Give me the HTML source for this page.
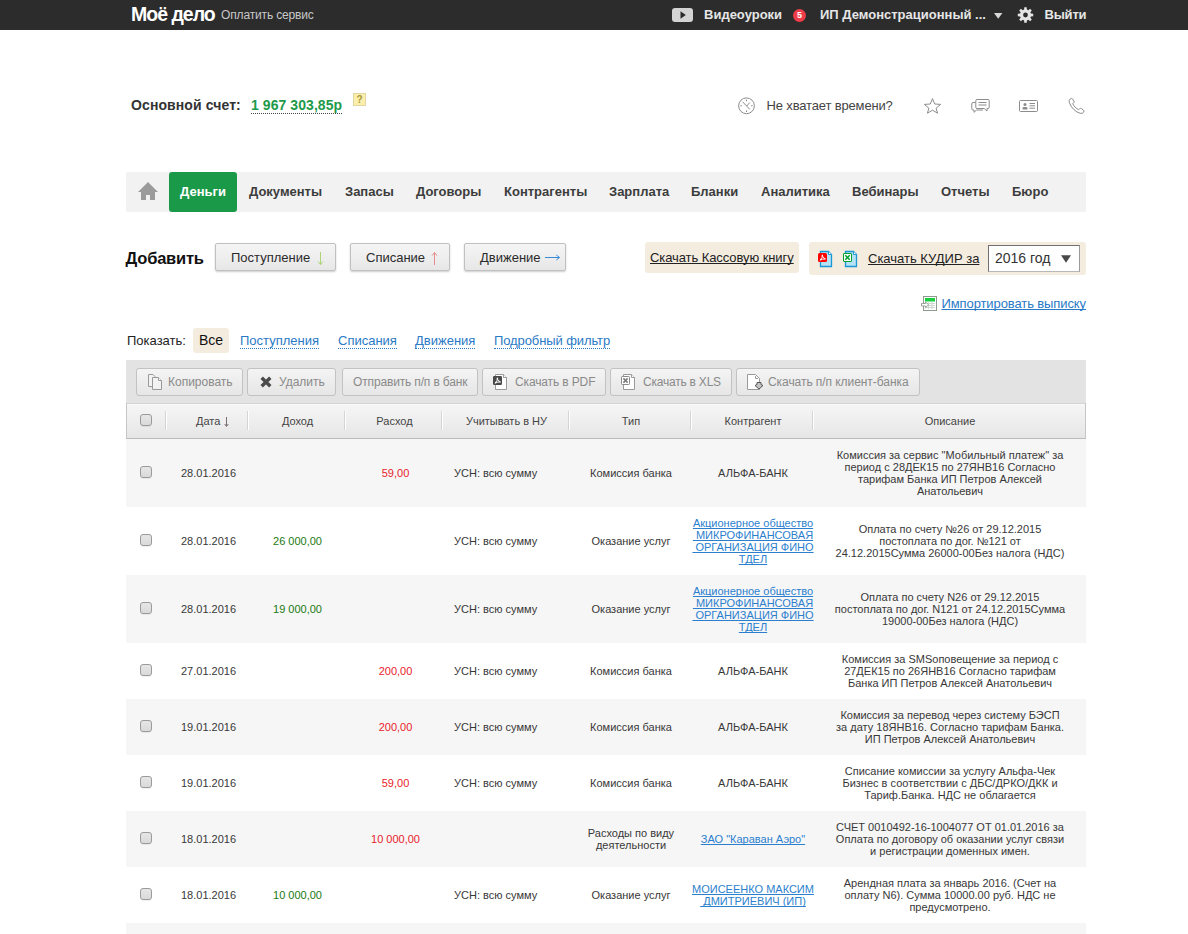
<!DOCTYPE html>
<html lang="ru">
<head>
<meta charset="utf-8">
<title>Моё дело — Деньги</title>
<style>
*{box-sizing:border-box;margin:0;padding:0}
html,body{width:1188px;height:934px;overflow:hidden;background:#fff}
body{font-family:"Liberation Sans",Arial,sans-serif;font-size:12px;color:#333;position:relative}
a{color:#2a7ac6}
*{text-decoration-skip-ink:none}
.abs{position:absolute;white-space:nowrap}
/* top bar */
#top{position:absolute;left:0;top:0;width:1188px;height:30px;background:#2c2c2c}
#logo{left:131px;top:3px;font-size:19.5px;font-weight:bold;color:#fff;line-height:22px;letter-spacing:-1px}
#pay{left:221px;top:7px;font-size:12px;letter-spacing:-.15px;color:#c8c8c8;line-height:16px}
#video{left:704px;top:6px;font-size:13px;font-weight:bold;color:#e6e6e6;line-height:17px}
#badge{left:793px;top:9px;width:13px;height:13px;border-radius:7px;background:#ee3d49;color:#fff;font-size:9px;font-weight:bold;text-align:center;line-height:13px}
#firm{left:820px;top:6px;font-size:13px;font-weight:bold;color:#e6e6e6;line-height:17px}
#exit{left:1044.5px;top:6px;letter-spacing:-.2px;font-size:13px;font-weight:bold;color:#e6e6e6;line-height:17px}
/* account row */
#acc{left:131px;top:97px;font-size:14px;letter-spacing:.1px;font-weight:bold;color:#333;line-height:17px}
#sum{left:251px;top:97px;font-size:14px;font-weight:bold;color:#1e9a4a;line-height:16px;letter-spacing:.07px;border-bottom:1px dotted #444}
#q{left:353px;top:93px;width:13px;height:13px;background:#fcefad;border:1px solid #e2d6a0;color:#a6973a;font-size:10px;font-weight:bold;text-align:center;line-height:12px}
#time{left:766.5px;top:98px;font-size:13px;letter-spacing:-.15px;color:#444;line-height:16px}
/* nav */
#nav{position:absolute;left:126px;top:172px;width:960px;height:40px;background:#f2f2f2;border-radius:2px}
#nav span{position:absolute;top:12px;font-size:13px;font-weight:bold;color:#3c3c3c;line-height:16px;white-space:nowrap}
#nav .act{left:43px;top:0;width:68px;height:40px;background:#1a9a49;border-radius:3px;color:#fff;text-align:center;line-height:40px}
/* add row */
#add{left:125.5px;top:247.5px;font-size:16.5px;letter-spacing:-.2px;font-weight:bold;color:#111;line-height:21px}
.btn{position:absolute;top:243px;height:28px;border:1px solid #c0c0c0;border-radius:2px;background:linear-gradient(#f5f5f5,#e7e7e7);font-size:13px;color:#2a2a2a;line-height:27px;text-align:left;white-space:nowrap;box-shadow:0 1px 2px rgba(0,0,0,.2)}
.beige{position:absolute;background:#f5ece0;border-radius:3px}
.ul{font-size:13px;color:#222;text-decoration:underline;line-height:16px}
#year{left:988px;top:245px;width:92px;height:27px;background:#fff;border:1px solid;border-color:#707070 #9a9a9a #b8b8b8 #707070;font-size:14px;color:#333;line-height:24px;padding-left:6px}
#imp{left:941.5px;top:296px;font-size:13px;letter-spacing:-.1px;color:#2a7ac6;text-decoration:underline;line-height:16px}
/* filter */
#show{left:127px;top:333px;font-size:13px;color:#222;line-height:16px}
#all{left:199px;top:332px;font-size:14px;color:#111;line-height:17px}
.flt{position:absolute;top:333px;font-size:13px;color:#2a7ac6;line-height:15px;border-bottom:1px dotted #2a7ac6;white-space:nowrap}
/* toolbar */
#tb{position:absolute;left:126px;top:360px;width:960px;height:43px;background:#e3e3e3}
.tbtn{position:absolute;top:8px;height:28px;border:1px solid #c2c2c2;border-radius:3px;background:linear-gradient(#f4f4f4,#e6e6e6);font-size:12px;color:#8a8a8a;line-height:26px;white-space:nowrap}
.tbtn b{position:absolute;font-weight:normal;top:0}
/* table head */
#th{position:absolute;left:126px;top:403px;width:960px;height:36px;background:linear-gradient(#d4d4d4 0,#d4d4d4 1px,#fafafa 1px,#f5f5f5 3px,#e6e6e6 100%);border-bottom:1px solid #bcbcbc;box-shadow:inset 1px 0 0 #c6c6c6,inset -1px 0 0 #c6c6c6}
#th span{position:absolute;top:11px;font-size:11px;color:#444;line-height:14px;text-align:center;white-space:nowrap}
#th i{position:absolute;top:8px;width:1px;height:19px;background:#d4d4d4;border-right:1px solid #fff;box-sizing:content-box}
/* rows */
.row{position:absolute;left:126px;width:960px;font-size:11px;color:#383838;line-height:12px}
.row.g{background:#f6f6f6}
.row div{position:absolute;text-align:center;white-space:nowrap}
.cb{position:absolute;left:14px;width:12px;height:12px;border:1px solid #9a9a9a;border-radius:3px;background:linear-gradient(#e6e6e6,#dadada);box-shadow:0 1px 0 rgba(0,0,0,.06)}
.inc{color:#1b7a12}
.exp{color:#e9212b}
.row a{color:#2b7fce;text-decoration:underline}
</style>
</head>
<body>
<div id="top"></div>
<div class="abs" id="logo">Моё дело</div>
<div class="abs" id="pay">Оплатить сервис</div>
<div class="abs" id="video">Видеоуроки</div>
<div class="abs" id="badge">5</div>
<div class="abs" id="firm">ИП Демонстрационный ...</div>
<div class="abs" id="exit">Выйти</div>

<div class="abs" id="acc">Основной счет:</div>
<div class="abs" id="sum">1 967 303,85р</div>
<div class="abs" id="q">?</div>
<div class="abs" id="time">Не хватает времени?</div>

<div id="nav">
<span class="act">Деньги</span>
<span style="left:123px">Документы</span>
<span style="left:219px">Запасы</span>
<span style="left:290px">Договоры</span>
<span style="left:378px">Контрагенты</span>
<span style="left:483px">Зарплата</span>
<span style="left:565px">Бланки</span>
<span style="left:635px">Аналитика</span>
<span style="left:726px">Вебинары</span>
<span style="left:815px">Отчеты</span>
<span style="left:886px">Бюро</span>
</div>

<div class="abs" id="add">Добавить</div>
<div class="btn" style="left:215px;width:121px;padding-left:15px">Поступление</div>
<div class="btn" style="left:350px;width:100px;padding-left:15px">Списание</div>
<div class="btn" style="left:464px;width:102px;padding-left:15px">Движение</div>

<div class="beige" style="left:645px;top:242px;width:154px;height:31px"></div>
<div class="abs ul" style="left:650px;top:250px;letter-spacing:-.08px">Скачать Кассовую книгу</div>
<div class="beige" style="left:809px;top:242px;width:277px;height:33px"></div>
<div class="abs ul" style="left:868px;top:251px">Скачать КУДИР за</div>
<div class="abs" id="year">2016 год</div>
<div class="abs" id="imp">Импортировать выписку</div>

<div class="abs" id="show">Показать:</div>
<div class="beige" style="left:193px;top:328px;width:36px;height:25px"></div>
<div class="abs" id="all">Все</div>
<div class="flt" style="left:240px">Поступления</div>
<div class="flt" style="left:338px">Списания</div>
<div class="flt" style="left:415px">Движения</div>
<div class="flt" style="left:494px;letter-spacing:-.1px">Подробный фильтр</div>

<div id="tb">
<div class="tbtn" style="left:10px;width:107px"><b style="left:31px">Копировать</b></div>
<div class="tbtn" style="left:121px;width:89px"><b style="left:31px">Удалить</b></div>
<div class="tbtn" style="left:216px;width:136px"><b style="left:10px;letter-spacing:-.15px">Отправить п/п в банк</b></div>
<div class="tbtn" style="left:356px;width:124px"><b style="left:32px;letter-spacing:-.13px">Скачать в PDF</b></div>
<div class="tbtn" style="left:484px;width:122px"><b style="left:32px;letter-spacing:-.22px">Скачать в XLS</b></div>
<div class="tbtn" style="left:610px;width:184px"><b style="left:31px;letter-spacing:-.06px">Скачать п/п клиент-банка</b></div>
</div>

<div id="th">
<div class="cb" style="top:11px"></div>
<i style="left:39px"></i><i style="left:121px"></i><i style="left:218px"></i><i style="left:315px"></i><i style="left:442px"></i><i style="left:564px"></i><i style="left:686px"></i>
<span style="left:70px">Дата</span>
<span style="left:123px;width:97px">Доход</span>
<span style="left:220px;width:97px">Расход</span>
<span style="left:317px;width:127px">Учитывать в НУ</span>
<span style="left:444px;width:122px">Тип</span>
<span style="left:566px;width:122px">Контрагент</span>
<span style="left:688px;width:272px">Описание</span>
</div>

<!--ROWS-->
<div class="row g" style="top:439px;height:68px"><div class="cb" style="top:27px"></div><div style="left:42px;width:81px;top:28px">28.01.2016</div><div class="exp" style="left:221px;width:97px;top:28px">59,00</div><div style="left:328px;width:116px;top:28px;text-align:left">УСН: всю сумму</div><div style="left:444px;width:122px;top:28px">Комиссия банка</div><div style="left:566px;width:122px;top:28px">АЛЬФА-БАНК</div><div style="left:688px;width:272px;top:10px">Комиссия за сервис "Мобильный платеж" за<br>период с 28ДЕК15 по 27ЯНВ16 Согласно<br>тарифам Банка ИП Петров Алексей<br>Анатольевич</div></div>
<div class="row" style="top:507px;height:68px"><div class="cb" style="top:27px"></div><div style="left:42px;width:81px;top:28px">28.01.2016</div><div class="inc" style="left:123px;width:97px;top:28px">26 000,00</div><div style="left:328px;width:116px;top:28px;text-align:left">УСН: всю сумму</div><div style="left:444px;width:122px;top:28px">Оказание услуг</div><div style="left:566px;width:122px;top:10px"><a>Акционерное общество<br>&nbsp;МИКРОФИНАНСОВАЯ<br>&nbsp;ОРГАНИЗАЦИЯ ФИНО<br>ТДЕЛ</a></div><div style="left:688px;width:272px;top:16px">Оплата по счету №26 от 29.12.2015<br>постоплата по дог. №121 от<br>24.12.2015Сумма 26000-00Без налога (НДС)</div></div>
<div class="row g" style="top:575px;height:68px"><div class="cb" style="top:27px"></div><div style="left:42px;width:81px;top:28px">28.01.2016</div><div class="inc" style="left:123px;width:97px;top:28px">19 000,00</div><div style="left:328px;width:116px;top:28px;text-align:left">УСН: всю сумму</div><div style="left:444px;width:122px;top:28px">Оказание услуг</div><div style="left:566px;width:122px;top:10px"><a>Акционерное общество<br>&nbsp;МИКРОФИНАНСОВАЯ<br>&nbsp;ОРГАНИЗАЦИЯ ФИНО<br>ТДЕЛ</a></div><div style="left:688px;width:272px;top:16px">Оплата по счету N26 от 29.12.2015<br>постоплата по дог. N121 от 24.12.2015Сумма<br>19000-00Без налога (НДС)</div></div>
<div class="row" style="top:643px;height:56px"><div class="cb" style="top:21px"></div><div style="left:42px;width:81px;top:22px">27.01.2016</div><div class="exp" style="left:221px;width:97px;top:22px">200,00</div><div style="left:328px;width:116px;top:22px;text-align:left">УСН: всю сумму</div><div style="left:444px;width:122px;top:22px">Комиссия банка</div><div style="left:566px;width:122px;top:22px">АЛЬФА-БАНК</div><div style="left:688px;width:272px;top:10px">Комиссия за SMSоповещение за период с<br>27ДЕК15 по 26ЯНВ16 Согласно тарифам<br>Банка ИП Петров Алексей Анатольевич</div></div>
<div class="row g" style="top:699px;height:56px"><div class="cb" style="top:21px"></div><div style="left:42px;width:81px;top:22px">19.01.2016</div><div class="exp" style="left:221px;width:97px;top:22px">200,00</div><div style="left:328px;width:116px;top:22px;text-align:left">УСН: всю сумму</div><div style="left:444px;width:122px;top:22px">Комиссия банка</div><div style="left:566px;width:122px;top:22px">АЛЬФА-БАНК</div><div style="left:688px;width:272px;top:10px">Комиссия за перевод через систему БЭСП<br>за дату 18ЯНВ16. Согласно тарифам Банка.<br>ИП Петров Алексей Анатольевич</div></div>
<div class="row" style="top:755px;height:56px"><div class="cb" style="top:21px"></div><div style="left:42px;width:81px;top:22px">19.01.2016</div><div class="exp" style="left:221px;width:97px;top:22px">59,00</div><div style="left:328px;width:116px;top:22px;text-align:left">УСН: всю сумму</div><div style="left:444px;width:122px;top:22px">Комиссия банка</div><div style="left:566px;width:122px;top:22px">АЛЬФА-БАНК</div><div style="left:688px;width:272px;top:10px">Списание комиссии за услугу Альфа-Чек<br>Бизнес в соответствии с ДБС/ДРКО/ДКК и<br>Тариф.Банка. НДС не облагается</div></div>
<div class="row g" style="top:811px;height:56px"><div class="cb" style="top:21px"></div><div style="left:42px;width:81px;top:22px">18.01.2016</div><div class="exp" style="left:221px;width:97px;top:22px">10 000,00</div><div style="left:444px;width:122px;top:16px">Расходы по виду<br>деятельности</div><div style="left:566px;width:122px;top:22px"><a>ЗАО "Караван Аэро"</a></div><div style="left:688px;width:272px;top:10px">СЧЕТ 0010492-16-1004077 ОТ 01.01.2016 за<br>Оплата по договору об оказании услуг связи<br>и регистрации доменных имен.</div></div>
<div class="row" style="top:867px;height:56px"><div class="cb" style="top:21px"></div><div style="left:42px;width:81px;top:22px">18.01.2016</div><div class="inc" style="left:123px;width:97px;top:22px">10 000,00</div><div style="left:328px;width:116px;top:22px;text-align:left">УСН: всю сумму</div><div style="left:444px;width:122px;top:22px">Оказание услуг</div><div style="left:566px;width:122px;top:16px"><a>МОИСЕЕНКО МАКСИМ<br>&nbsp;ДМИТРИЕВИЧ (ИП)</a></div><div style="left:688px;width:272px;top:10px">Арендная плата за январь 2016. (Счет на<br>оплату N6). Сумма 10000.00 руб. НДС не<br>предусмотрено.</div></div>
<div class="row g" style="top:923px;height:56px"></div>
<!--/ROWS-->
<svg id="icons" width="1188" height="934" viewBox="0 0 1188 934" style="position:absolute;left:0;top:0;pointer-events:none">
<!-- top bar -->
<rect x="672" y="8" width="21" height="14" rx="3" fill="#d4d4d4"/>
<path d="M680.5 11.2 L680.5 18.8 L685.8 15Z" fill="#2c2c2c"/>
<path d="M994 13 L1002.4 13 L998.2 18.8Z" fill="#d8d8d8"/>
<path d="M1024.11 9.58 L1024.28 7.30 L1026.72 7.30 L1026.89 9.58 L1028.35 10.18 L1030.08 8.69 L1031.81 10.42 L1030.32 12.15 L1030.92 13.61 L1033.20 13.78 L1033.20 16.22 L1030.92 16.39 L1030.32 17.85 L1031.81 19.58 L1030.08 21.31 L1028.35 19.82 L1026.89 20.42 L1026.72 22.70 L1024.28 22.70 L1024.11 20.42 L1022.65 19.82 L1020.92 21.31 L1019.19 19.58 L1020.68 17.85 L1020.08 16.39 L1017.80 16.22 L1017.80 13.78 L1020.08 13.61 L1020.68 12.15 L1019.19 10.42 L1020.92 8.69 L1022.65 10.18Z M1023.10 15.00 a2.4 2.4 0 1 0 4.8 0 a2.4 2.4 0 1 0 -4.8 0Z" fill="#e4e4e4" fill-rule="evenodd"/>
<!-- clock -->
<g fill="none" stroke="#8c8c8c" stroke-width="1">
<circle cx="746.5" cy="105.8" r="7.9"/>
<path d="M746.5 99.6v1.6M746.5 110.4v1.6M740.3 105.8h1.6M751.1 105.8h1.6M742.6 101.8L746.6 106L749.8 102.6M746.6 106L749.8 109.4"/>
</g>
<!-- star -->
<path d="M932.5 98.6 L934.7 104 L940.6 104.4 L936.1 108.2 L937.6 113.2 L932.5 110.2 L927.4 113.2 L928.9 108.2 L924.4 104.4 L930.3 104Z" fill="none" stroke="#8c8c8c" stroke-width="1" stroke-linejoin="miter"/>
<!-- chat -->
<g fill="#fff" stroke="#8c8c8c" stroke-width="1">
<path d="M975.5 102.5 H973 Q971.8 102.5 971.8 103.7 V108.8 Q971.8 110 973 110 H974 V112.3 L976.6 110 H983"/>
<path d="M977 99.5 H988 Q989.2 99.5 989.2 100.7 V107.3 Q989.2 108.5 988 108.5 H987 V111 L984.2 108.5 H977 Q975.8 108.5 975.8 107.3 V100.7 Q975.8 99.5 977 99.5Z"/>
<path d="M978.5 102.5h8M978.5 105h8" fill="none"/>
</g>
<!-- card -->
<g fill="none" stroke="#8c8c8c" stroke-width="1">
<rect x="1019.5" y="100.5" width="18" height="11" rx="1"/>
<path d="M1029.5 103.5h5.5M1029.5 105.8h5.5M1029.5 108.2h5.5"/>
</g>
<circle cx="1025" cy="104.5" r="1.5" fill="#8c8c8c"/>
<path d="M1022.6 109.5v-1.4q0-1.2 1.2-1.2h2.4q1.2 0 1.2 1.2v1.4z" fill="#8c8c8c"/>
<!-- phone -->
<path d="M1070.2 99 q-1.6 1.2 -0.9 3.4 q1 3.6 4.3 6.9 q3.3 3.2 6.6 4 q2.4 0.6 3.7 -1.4 q0.6 -1 -0.4 -1.8 l-2.1 -1.5 q-0.9 -0.6 -1.8 0.2 l-0.9 0.9 q-1.7 -0.7 -3.4 -2.4 q-1.8 -1.8 -2.5 -3.6 l0.9 -0.9 q0.8 -0.8 0.2 -1.8 l-1.5 -2.2 q-0.9 -1 -2.2 0.2z" fill="none" stroke="#8c8c8c" stroke-width="1"/>
<!-- home -->
<path d="M148 182 L158 192 H155 V200 H150 V195 H146 V200 H141 V192 H138Z" fill="#9b9b9b"/>
<!-- add-button arrows -->
<path d="M320.5 252v12.500M318 261.500l2.500 3.200l2.500 -3.200" fill="none" stroke="#add578" stroke-width="1"/>
<path d="M434.500 265v-12.500M432 255.700l2.500 -3.200l2.500 3.200" fill="none" stroke="#e58c8c" stroke-width="1"/>
<path d="M545 257.500h14.500M556.300 255l3.200 2.500l-3.200 2.500" fill="none" stroke="#3a8ad8" stroke-width="1"/>
<!-- pdf / xls colour icons -->
<path d="M820.5 251.5 H828.5 L831.5 254.5 V266.5 H820.5Z" fill="#b5e2f5" stroke="#1b98d4" stroke-width="1.3"/>
<path d="M828.5 251.5 V254.5 H831.5" fill="#fff" stroke="#1f9ad2" stroke-width="1"/>
<rect x="818" y="253" width="9" height="9" rx="1.5" fill="#f00"/>
<path d="M822.3 254.8 q0.6 2.6 -2.2 5.4 M822.3 254.8 q-0.2 3 3.2 4.2 M820.1 260.2 q2.4 -1.6 5.4 -1.2" fill="none" stroke="#fff" stroke-width="1"/>
<path d="M845.5 251.5 H853.5 L856.5 254.5 V266.5 H845.5Z" fill="#b5e2f5" stroke="#1b98d4" stroke-width="1.3"/>
<path d="M853.5 251.5 V254.5 H856.5" fill="#fff" stroke="#1f9ad2" stroke-width="1"/>
<rect x="843.5" y="253.500" width="8" height="8" rx="0.5" fill="#fff" stroke="#04a02f" stroke-width="1"/>
<path d="M845.3 255.3 L849.7 259.7 M849.7 255.3 L845.3 259.7" stroke="#04a02f" stroke-width="1.6" fill="none"/>
<!-- select triangle -->
<path d="M1061 255.2 H1071 L1066 262.8Z" fill="#484848"/>
<!-- import icon -->
<rect x="923.5" y="296.500" width="13" height="14" fill="#fff" stroke="#8f9a8f" stroke-width="1"/>
<rect x="925" y="298" width="10" height="3.5" fill="#19d03c"/>
<path d="M925 303.500h10M925 305.500h10M925 307.500h10M928.5 301.500v7.500M932 301.500v7.500" stroke="#cfd8cf" stroke-width="1" fill="none"/>
<path d="M921.5 303.500 H925.5 V302 L928.6 304.800 L925.5 307.600 V306 H921.500Z" fill="#fff" stroke="#8f9a8f" stroke-width="0.9"/>
<!-- toolbar icons -->
<g stroke="#9a9a9a" stroke-width="1" fill="#f2f2f2">
<path d="M148.500 374.500 H153 L155 376.500 V386.500 H148.500Z"/>
<path d="M152.500 377.500 H158.500 L161.500 380.500 V389.500 H152.500Z"/>
<path d="M158.500 377.500 V380.500 H161.500" fill="#fff"/>
</g>
<path d="M261.700 377.700 L270.300 386.300 M270.300 377.700 L261.700 386.300" stroke="#4b4b4b" stroke-width="3.4" fill="none"/>
<g stroke="#9a9a9a" stroke-width="1" fill="#fff">
<path d="M495.500 374.500 H503.500 L506.500 377.500 V389.500 H495.500Z"/>
<path d="M503.500 374.500 V377.500 H506.500"/>
<path d="M623.500 374.500 H631.500 L634.500 377.500 V389.500 H623.500Z"/>
<path d="M631.500 374.500 V377.500 H634.500"/>
<path d="M747.500 374.500 H755.500 L759.500 378.500 V389.500 H747.500Z"/>
<path d="M755.500 376 V378.500 H758" fill="none"/>
</g>
<rect x="493" y="376" width="9" height="9" rx="1.300" fill="#4a4a4a"/>
<path d="M497.300 377.800 q0.600 2.600 -2.200 5.400 M497.300 377.800 q-0.200 3 3.200 4.200 M495.100 383.200 q2.400 -1.600 5.400 -1.200" fill="none" stroke="#fff" stroke-width="1"/>
<rect x="621.500" y="376.500" width="8" height="8" rx="0.800" fill="#fff" stroke="#8a8a8a" stroke-width="1"/>
<path d="M623.400 378.400 L627.600 382.600 M627.600 378.400 L623.400 382.600" stroke="#7a7a7a" stroke-width="1.500" fill="none"/>
<path d="M757 382.500 H761 V384.500 L763 385.500 L759 389 L755 385.500 L757 384.500Z" fill="#c4c4c4" stroke="#555" stroke-width="1" stroke-linejoin="round"/>
<!-- header sort arrow -->
<path d="M226.500 417v9M224.700 424l1.800 2.500l1.800 -2.500" fill="none" stroke="#7c6f6f" stroke-width="1"/>
</svg>
</body>
</html>
